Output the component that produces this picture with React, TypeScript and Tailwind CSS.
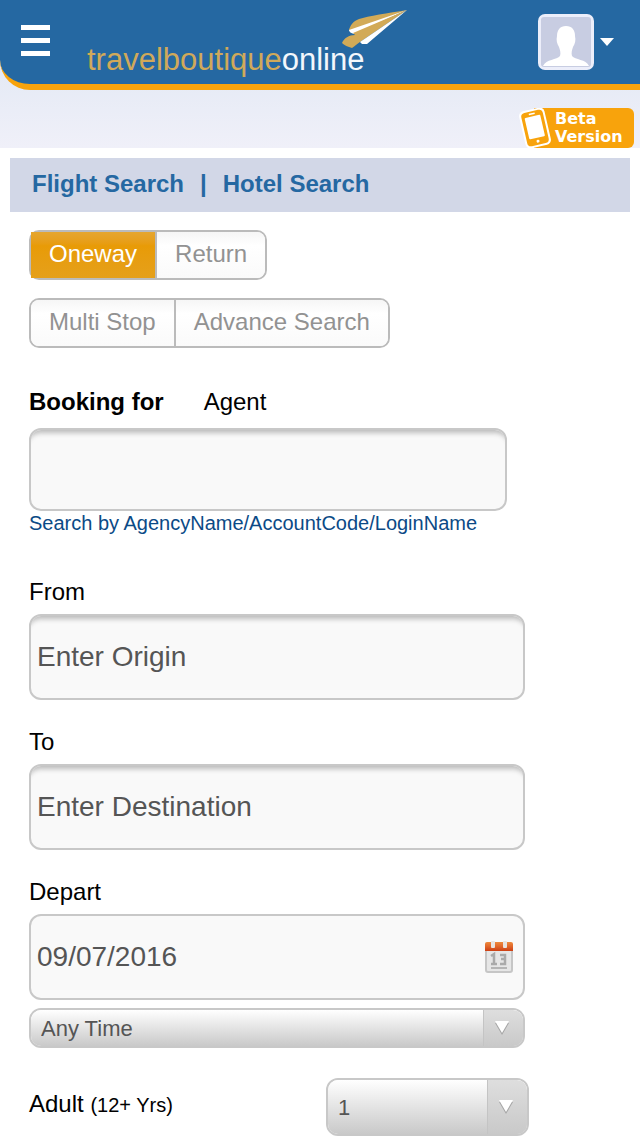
import type { ReactNode } from "react";

const Logo = () => {
    return (
        <a href="#" className="relative ml-[37px] mt-11 block text-[31px] leading-8 text-[#d0a95a]">
            travelboutique<span className="text-[#f3f7fc]">online</span>
            <svg
                viewBox="0 0 68 40"
                className="absolute -top-9 left-[253px] h-10 w-[68px]"
                aria-hidden="true"
            >
                <path d="M9 22C10 18 13 13 19 11C28 8 48 5 67 2L36 14L9 23Z" fill="#d2aa57" />
                <path d="M9 22L67 2L14 26C11 25 9 24 9 22Z" fill="#fff" />
                <path d="M67 2L13 25L15 27C9 27 4 30 2 35C4 37 8 39 12 40C15 38 17 36 20 34Z" fill="#d2aa57" />
                <path d="M67 2L20 34L22 36H27L34 30Z" fill="#fff" />
            </svg>
        </a>
    );
};

const Avatar = () => {
    return (
        <button type="button" aria-label="Account" className="mt-[14px] mr-[26px] flex items-center gap-[6px]">
            <svg viewBox="0 0 56 56" className="size-14" aria-hidden="true">
                <rect width="56" height="56" rx="7" fill="#eceefa" />
                <rect x="3" y="3" width="50" height="50" rx="3" fill="#c8cde2" />
                <path
                    d="M28 12C34 12 37 16 37 22C38 26 37 30 35 33C34 36 33 39 34 42C37 46 48 45 51 52H5C8 45 19 46 22 42C23 39 22 36 21 33C19 30 18 26 19 22C19 16 22 12 28 12Z"
                    fill="#fff"
                />
            </svg>
            <svg viewBox="0 0 14 8" className="h-2 w-[14px]" aria-hidden="true">
                <path d="M0 0H14L7 8Z" fill="#fff" />
            </svg>
        </button>
    );
};

const BetaBadge = () => {
    return (
        <div className="relative flex h-10 w-[100px] flex-col justify-center rounded-r-md bg-[#f8a30c] pl-[21px] font-['DejaVu_Sans',sans-serif] text-base font-bold leading-[18px] text-white">
            <span>Beta</span>
            <span>Version</span>
            <svg viewBox="0 0 34 40" className="absolute -left-4 top-0 h-10 w-[34px]" aria-hidden="true">
                <g transform="rotate(-13 17 20)">
                    <rect x="4" y="1" width="26" height="38" rx="5" fill="#fff" />
                    <rect x="6" y="3" width="22" height="34" rx="4" fill="#f8a30c" />
                    <rect x="9" y="8" width="16" height="22" rx="1" fill="#fff" />
                    <path d="M14 5.5H20" stroke="#fff" strokeWidth="1.5" />
                    <circle cx="17" cy="33.5" r="1.5" fill="#fff" />
                </g>
            </svg>
        </div>
    );
};

const CalendarIcon = () => {
    return (
        <svg viewBox="0 0 28 32" className="h-8 w-7" aria-hidden="true">
            <defs>
                <linearGradient id="calTop" x1="0" y1="0" x2="0" y2="1">
                    <stop offset="0" stopColor="#ee8a3c" />
                    <stop offset="0.5" stopColor="#e0662a" />
                    <stop offset="1" stopColor="#cc3f14" />
                </linearGradient>
            </defs>
            <rect x="1" y="3" width="26" height="28" rx="2" fill="#e6e6e6" stroke="#c6c6c6" strokeWidth="2" />
            <path d="M0 10V3Q0 1 2 1H26Q28 1 28 3V10Z" fill="url(#calTop)" />
            <rect x="6" y="0" width="4" height="7" rx="1" fill="#e8e4e0" />
            <rect x="18" y="0" width="4" height="7" rx="1" fill="#e8e4e0" />
            <path d="M6 15L9 13V23M6 23H12M15 14H20V18H16M20 18V23H15" fill="none" stroke="#aaa" strokeWidth="2.5" />
            <path d="M6 27H22" stroke="#b5b5b5" strokeWidth="2" />
        </svg>
    );
};

const Segments = ({ items, active }: { items: string[]; active?: string }) => {
    return (
        <div className="flex w-fit divide-x-2 divide-[#bbb] rounded-[10px] border-2 border-[#bbb]">
            {items.map((item) => (
                <button
                    key={item}
                    type="button"
                    className={
                        item === active
                            ? "h-[46px] bg-linear-to-b from-[#e5a62f] via-[#e89b06] via-30% to-[#e5a01a] px-[18px] pb-[2px] text-white"
                            : "h-[46px] bg-linear-to-b from-[#f6f6f6] via-white via-30% to-[#fafafa] px-[18px] pb-[2px] text-[#929292] first:rounded-l-lg last:rounded-r-lg"
                    }
                >
                    {item}
                </button>
            ))}
        </div>
    );
};

const inputStyle =
    "block w-full rounded-xl border-2 border-[#c8c8c8] bg-[#f9f9f9] px-[6px] text-[28px] text-[#555] placeholder:text-[#555] placeholder:opacity-100 shadow-[inset_0_8px_5px_-5px_#bcbcbc]";

const Field = ({ id, label, placeholder }: { id: string; label: string; placeholder: string }) => {
    return (
        <div className="mb-7">
            <label htmlFor={id} className="mb-2 block">{label}</label>
            <input id={id} type="text" placeholder={placeholder} className={`${inputStyle} h-[86px]`} />
        </div>
    );
};

const Select = ({ id, label, size, children }: { id: string; label?: string; size: string; children: ReactNode }) => {
    return (
        <div className={`relative overflow-hidden rounded-xl border-2 border-[#c8c8c8] ${size}`}>
            <select
                id={id}
                aria-label={label}
                className="block h-full w-full appearance-none bg-linear-to-b from-white to-[#c9c9c9] px-[10px] pt-[2px] text-[22px] text-[#555]"
            >
                {children}
            </select>
            <span className="pointer-events-none absolute inset-y-0 right-0 flex w-10 items-center justify-center border-l border-[#c4c4c4] bg-linear-to-b from-[#dedede] to-[#c9c9c9] pr-1">
                <svg viewBox="0 0 16 14" className="h-[14px] w-4" aria-hidden="true">
                    <path d="M1 2L8 14L15 2Z" fill="#a5a5a5" />
                    <path d="M1 0H15L8 12Z" fill="#fff" />
                </svg>
            </span>
        </div>
    );
};

const App = () => {
    return (
        <div className="bg-white font-['Liberation_Sans',Arial,sans-serif] text-2xl leading-7 text-black">
            <div className="bg-linear-to-b from-[#e2e8f4] via-[#e5eaf5] to-[#f0f0f9]">
                <header className="flex h-[90px] items-start rounded-bl-[30px] border-b-[6px] border-[#f8a30c] bg-[#2568a2]">
                    <button type="button" aria-label="Menu" className="ml-[21px] mt-[25px] flex flex-col gap-2">
                        <span className="h-[5px] w-[29px] bg-white" />
                        <span className="h-[5px] w-[29px] bg-white" />
                        <span className="h-[5px] w-[29px] bg-white" />
                    </button>
                    <Logo />
                    <div className="ml-auto">
                        <Avatar />
                    </div>
                </header>
                <div className="flex justify-end pr-[6px] pt-[18px]">
                    <BetaBadge />
                </div>
            </div>

            <nav className="mx-[10px] mt-[10px] flex h-[54px] items-center bg-[#d2d7e7] px-[22px] pb-[2px] font-bold text-[#2568a2]">
                <a href="#flight">Flight Search</a>
                <span className="mx-4">|</span>
                <a href="#hotel">Hotel Search</a>
            </nav>

            <form className="pl-[29px] pr-5 pt-[18px]">
                <div className="mb-10 flex flex-col gap-[18px]">
                    <Segments items={["Oneway", "Return"]} active="Oneway" />
                    <Segments items={["Multi Stop", "Advance Search"]} />
                </div>

                <div className="mb-[43px] max-w-[478px]">
                    <div className="mb-3 flex gap-10">
                        <label htmlFor="agent" className="font-bold">Booking for</label>
                        <span>Agent</span>
                    </div>
                    <input id="agent" type="text" className={`${inputStyle} h-[83px]`} />
                    <p className="text-xl leading-6 text-[#0b4a86]">Search by AgencyName/AccountCode/LoginName</p>
                </div>

                <div className="max-w-[496px]">
                    <Field id="from" label="From" placeholder="Enter Origin" />
                    <Field id="to" label="To" placeholder="Enter Destination" />

                    <label htmlFor="depart" className="mb-2 block">Depart</label>
                    <div className="mb-2 flex h-[86px] items-center rounded-xl border-2 border-[#c8c8c8] bg-[#f9f9f9] pl-[6px] pr-[10px]">
                        <input
                            id="depart"
                            type="text"
                            defaultValue="09/07/2016"
                            className="h-full min-w-0 flex-1 bg-transparent text-[28px] text-[#555]"
                        />
                        <button type="button" aria-label="Pick a date">
                            <CalendarIcon />
                        </button>
                    </div>
                    <Select id="time" label="Departure time" size="h-10">
                        <option>Any Time</option>
                    </Select>
                </div>

                <div className="mt-[30px] flex max-w-[500px] items-start justify-between">
                    <label htmlFor="adult" className="mt-3">
                        Adult <span className="text-xl leading-7">(12+ Yrs)</span>
                    </label>
                    <Select id="adult" size="h-[58px] w-[203px]">
                        <option>1</option>
                    </Select>
                </div>
            </form>
        </div>
    );
};

export default App;
